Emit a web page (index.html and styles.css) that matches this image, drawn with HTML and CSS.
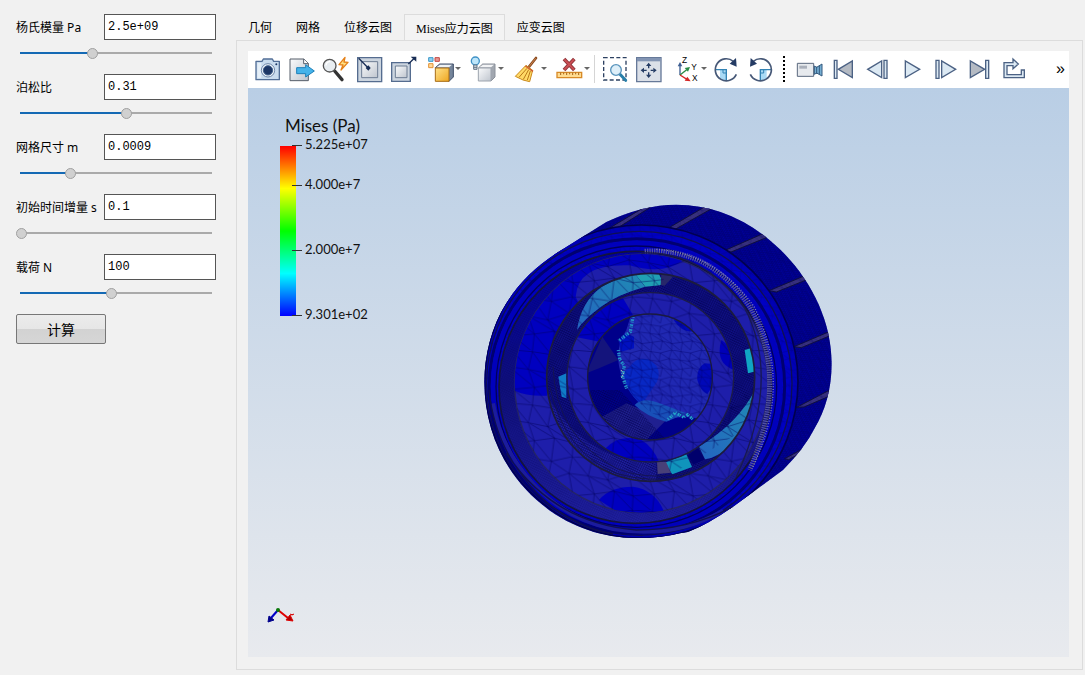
FILE: index.html
```html
<!DOCTYPE html>
<html lang="zh-CN">
<head>
  <meta charset="UTF-8">
  <title>Mises应力云图</title>
  <link rel="stylesheet" href="styles.css">
</head>
<body>
  <form class="params">
    <div class="field">
      <label for="young">杨氏模量 Pa</label>
      <input class="value" id="young" type="text" value="2.5e+09">
      <input class="slider" type="range" aria-label="杨氏模量" min="0" max="1000" value="376" style="--fill: 38%">
    </div>
    <div class="field">
      <label for="poisson">泊松比</label>
      <input class="value" id="poisson" type="text" value="0.31">
      <input class="slider" type="range" aria-label="泊松比" min="0" max="1000" value="556" style="--fill: 55%">
    </div>
    <div class="field">
      <label for="mesh">网格尺寸 m</label>
      <input class="value" id="mesh" type="text" value="0.0009">
      <input class="slider" type="range" aria-label="网格尺寸" min="0" max="1000" value="259" style="--fill: 27%">
    </div>
    <div class="field">
      <label for="step">初始时间增量 s</label>
      <input class="value" id="step" type="text" value="0.1">
      <input class="slider" type="range" aria-label="初始时间增量" min="0" max="1000" value="0" style="--fill: 3%">
    </div>
    <div class="field">
      <label for="load">载荷 N</label>
      <input class="value" id="load" type="text" value="100">
      <input class="slider" type="range" aria-label="载荷" min="0" max="1000" value="476" style="--fill: 48%">
    </div>
    <button class="run" type="button">计算</button>
  </form>

  <main class="results">
    <div class="tabs" role="tablist">
      <button class="tab" role="tab">几何</button>
      <button class="tab" role="tab">网格</button>
      <button class="tab" role="tab">位移云图</button>
      <button class="tab active" role="tab" aria-selected="true">Mises应力云图</button>
      <button class="tab" role="tab">应变云图</button>
    </div>

    <div class="pane">
      <div class="toolbar">
        <button class="tool" aria-label="截图">
          <svg viewBox="0 0 84 84">
            <path d="M9 19h18l4-7h27l4 7h17v55H9z" fill="#c9dcee" stroke="#526e96" stroke-width="4" stroke-linejoin="round"/>
            <path d="M13 24h12v45H13z" fill="#e5eff8"/>
            <circle cx="45" cy="46" r="20" fill="#edf3f9" stroke="#6f87a8" stroke-width="3"/>
            <circle cx="45" cy="46" r="14" fill="#1d3765" stroke="#46658f" stroke-width="3"/>
            <circle cx="70" cy="28" r="3" fill="#1d3765"/>
          </svg>
        </button>
        <button class="tool" aria-label="导出">
          <svg viewBox="0 0 84 84">
            <path d="M9 12h42l13 13v52H9z" fill="url(#steel)" stroke="#555d69" stroke-width="3"/>
            <path d="M50 12v14h14" fill="#fff" stroke="#555d69" stroke-width="3"/>
            <path d="M29 38h27v-9l26 19-26 18v-10H29z" fill="#45b3ea" stroke="#1d7fb8" stroke-width="3"/>
          </svg>
        </button>
        <button class="tool" aria-label="快速缩放">
          <svg viewBox="0 0 84 84">
            <path d="M41 48l22 26" stroke="#333" stroke-width="10" stroke-linecap="round"/>
            <circle cx="26" cy="32" r="19" fill="#e8edf1" stroke="#555" stroke-width="4"/>
            <path d="M15 31c1-8 6-12 13-11" fill="none" stroke="#fff" stroke-width="4"/>
            <path d="M72 7L54 29l12 1-6 15 21-23-12-1z" fill="#ffdf83" stroke="#e58018" stroke-width="4" stroke-linejoin="round"/>
          </svg>
        </button>
        <button class="tool" aria-label="缩放到数据">
          <svg viewBox="0 0 84 84">
            <path d="M8 8h72v72H8z" fill="#ccd5df" stroke="#556c8f" stroke-width="4"/>
            <path d="M20 20h48v48H20z" fill="url(#steel)" stroke="#6c7c92" stroke-width="3"/>
            <path d="M11 10l28 28" stroke="#182d55" stroke-width="4"/>
            <path d="M32 39l8-8 7 8-7 8z" fill="#182d55"/>
          </svg>
        </button>
        <button class="tool" aria-label="缩小到数据">
          <svg viewBox="0 0 84 84">
            <path d="M8 23h56v56H8z" fill="#ccd5df" stroke="#556c8f" stroke-width="4"/>
            <path d="M19 33h35v35H19z" fill="url(#steel)" stroke="#6c7c92" stroke-width="3"/>
            <path d="M58 27l18-17" stroke="#182d55" stroke-width="4"/>
            <path d="M65 5h17v15z" fill="#182d55"/>
          </svg>
        </button>
        <button class="tool menu" aria-label="背面颜色">
          <svg viewBox="0 0 84 84">
            <path d="M5 8h13v11H5z" fill="#8fd1f2" stroke="#3d98c8" stroke-width="3"/>
            <path d="M24 8h13v11H24z" fill="#e79a94" stroke="#c24742" stroke-width="3"/>
            <path d="M5 26h13v12H5z" fill="#ffd99b" stroke="#e39235" stroke-width="3"/>
            <path d="M25 38l13-11h41v39L66 79z" fill="#75859b" stroke="#3e4d68" stroke-width="3" stroke-linejoin="round"/>
            <path d="M28 37l11-8h36l-9 8z" fill="#eef2f6"/>
            <path d="M25 39h41v40H25z" fill="url(#gold)" stroke="#a86d16" stroke-width="3"/>
          </svg>
        </button>
        <button class="tool menu" aria-label="光照">
          <svg viewBox="0 0 84 84">
            <path d="M25 39l13-12h37v39L63 78z" fill="#a1a7b0" stroke="#8b919b" stroke-width="3" stroke-linejoin="round"/>
            <path d="M28 37l11-8h33l-9 8z" fill="#f3f4f6"/>
            <path d="M25 39h38v39H25z" fill="url(#steel)" stroke="#9da4ae" stroke-width="3"/>
            <circle cx="16" cy="18" r="12" fill="#bde6fb" stroke="#3f91c6" stroke-width="4"/>
            <path d="M11 30h10v13H11z" fill="#d3dbe3" stroke="#667686" stroke-width="3"/>
            <path d="M11 37h10" stroke="#667686" stroke-width="3"/>
          </svg>
        </button>
        <button class="tool menu" aria-label="清除">
          <svg viewBox="0 0 84 84">
            <path d="M69 9L46 38" stroke="#8c4b20" stroke-width="8" stroke-linecap="round"/>
            <path d="M68 10L48 35" stroke="#c98450" stroke-width="3"/>
            <path d="M39 31l20 15-9 34-20-5-23-11z" fill="#ffd966" stroke="#ca8b1e" stroke-width="3" stroke-linejoin="round"/>
            <path d="M42 40L18 67M47 44L31 73M52 48l-9 27" stroke="#b97818" stroke-width="3"/>
            <path d="M37 33l23 16" stroke="#d05c33" stroke-width="4"/>
          </svg>
        </button>
        <button class="tool menu" aria-label="删除测量">
          <svg viewBox="0 0 84 84">
            <path d="M24 12l31 33M55 12L24 45" stroke="#8e3539" stroke-width="11"/>
            <path d="M25 13l29 31M54 13L25 44" stroke="#ca4e54" stroke-width="6"/>
            <path d="M3 52h74v16H3z" fill="#ffdc91" stroke="#d88a27" stroke-width="4"/>
            <path d="M14 53v7M23 53v5M32 53v7M41 53v5M50 53v7M59 53v5M68 53v7" stroke="#a56313" stroke-width="3"/>
          </svg>
        </button>
        <span class="divider"></span>
        <button class="tool" aria-label="框选缩放">
          <svg viewBox="0 0 84 84">
            <path d="M8 8h67v67H8z" fill="none" stroke="#2d4162" stroke-width="4" stroke-dasharray="12 7"/>
            <path d="M57 58l17 18" stroke="#287fa9" stroke-width="9" stroke-linecap="round"/>
            <circle cx="45" cy="45" r="16" fill="#deeff9" stroke="#5793bc" stroke-width="4"/>
          </svg>
        </button>
        <button class="tool" aria-label="重置视图">
          <svg viewBox="0 0 84 84">
            <path d="M5 8h73v72H5z" fill="#dbe0e8" stroke="#667999" stroke-width="4"/>
            <path d="M6 9h71v10H6z" fill="#8294b3"/>
            <path d="M41 31v9M41 52v9M26 46h9M47 46h9" stroke="#243b64" stroke-width="4"/>
            <path d="M33 33l8-10 8 10zM33 59l8 10 8-10zM27 38l-10 8 10 8zM55 38l10 8-10 8z" fill="#243b64"/>
          </svg>
        </button>
        <button class="tool menu" aria-label="坐标轴方向">
          <svg viewBox="0 0 84 84">
            <path d="M21 60V30" stroke="#3d5e92" stroke-width="4"/>
            <path d="M14 34l7-13 7 13z" fill="#3d5e92"/>
            <path d="M21 60l20-16" stroke="#278b43" stroke-width="4"/>
            <path d="M35 39l16-3-6 14z" fill="#278b43"/>
            <path d="M21 60l21 13" stroke="#d52626" stroke-width="4"/>
            <path d="M43 65l10 14-18-2z" fill="#d52626"/>
            <text class="axis" x="27" y="23">Z</text>
            <text class="axis" x="55" y="44">Y</text>
            <text class="axis" x="57" y="79">X</text>
          </svg>
        </button>
        <button class="tool" aria-label="顺时针旋转">
          <svg viewBox="0 0 84 84">
            <path d="M24 43h19v34c-10 0-18-5-19-8z" fill="#a9daf5"/>
            <path d="M9 44h34v33" fill="none" stroke="#3383b4" stroke-width="4"/>
            <path d="M33 44v10h10" fill="none" stroke="#3383b4" stroke-width="3"/>
            <path d="M73 58A33 33 0 1 1 64 19" fill="none" stroke="#465877" stroke-width="5"/>
            <path d="M53 26l19-17 2 26z" fill="#243b64"/>
          </svg>
        </button>
        <button class="tool" aria-label="逆时针旋转">
          <svg viewBox="0 0 84 84">
            <path d="M43 43h19v26c-3 4-9 8-19 8z" fill="#a9daf5"/>
            <path d="M77 44H43v33" fill="none" stroke="#3383b4" stroke-width="4"/>
            <path d="M53 44v10H43" fill="none" stroke="#3383b4" stroke-width="3"/>
            <path d="M13 58A33 33 0 1 0 22 19" fill="none" stroke="#465877" stroke-width="5"/>
            <path d="M33 26L14 9l-2 26z" fill="#243b64"/>
          </svg>
        </button>
        <span class="grip"></span>
        <button class="tool" aria-label="录制">
          <svg viewBox="0 0 84 84">
            <path d="M4 25h49v39H4z" fill="#e7eaee" stroke="#59687e" stroke-width="3"/>
            <path d="M10 32h23v9H10z" fill="#aab0bb"/>
            <path d="M55 33l7 4 16-10v36l-16-9-7 4z" fill="#76afd3" stroke="#34597e" stroke-width="3"/>
            <path d="M62 35v22M70 32v26" stroke="#34597e" stroke-width="3"/>
          </svg>
        </button>
        <button class="tool" aria-label="第一帧">
          <svg class="play" viewBox="0 0 84 84"><path d="M13 16h8v54h-8z"/><path d="M67 18v50L25 43z" fill="#b4bac3"/></svg>
        </button>
        <button class="tool" aria-label="上一帧">
          <svg class="play" viewBox="0 0 84 84"><path d="M53 18v50L11 43zM60 16h9v54h-9z"/></svg>
        </button>
        <button class="tool" aria-label="播放">
          <svg class="play" viewBox="0 0 84 84"><path d="M22 18v50l43-25z"/></svg>
        </button>
        <button class="tool" aria-label="下一帧">
          <svg class="play" viewBox="0 0 84 84"><path d="M12 16h9v54h-9zM29 18v50l42-25z"/></svg>
        </button>
        <button class="tool" aria-label="最后一帧">
          <svg class="play" viewBox="0 0 84 84"><path d="M13 18v50l43-25z" fill="#b4bac3"/><path d="M59 16h9v54h-9z"/></svg>
        </button>
        <button class="tool" aria-label="循环">
          <svg class="play" viewBox="0 0 84 84"><path d="M12 68V23h27V12l16 15-16 14v-9H21v27h43V45h9v23z"/></svg>
        </button>
        <button class="more" aria-label="更多">»</button>
      </div>

      <div class="viewport">
        <svg class="legend" viewBox="0 0 100 210">
          <text class="legend-title" x="5" y="16">Mises (Pa)</text>
          <path d="M0 30h16v170H0z" fill="url(#rainbow)"/>
          <path d="M12 29h10v1H12zM12 69h10v1H12zM12 134h10v1H12zM12 199h10v1H12z" fill="#333"/>
          <text x="25" y="33">5.225e+07</text>
          <text x="25" y="73">4.000e+7</text>
          <text x="25" y="138">2.000e+7</text>
          <text x="25" y="203">9.301e+02</text>
        </svg>

        <svg class="model" viewBox="-2 9 1140 1080">
          <defs>
            <linearGradient id="rainbow" x2="0" y2="1">
              <stop offset="0" stop-color="#f00"/>
              <stop offset=".25" stop-color="#ff0"/>
              <stop offset=".5" stop-color="#0f0"/>
              <stop offset=".75" stop-color="#0ff"/>
              <stop offset="1" stop-color="#00f"/>
            </linearGradient>
            <linearGradient id="steel" x2="1" y2="1">
              <stop offset="0" stop-color="#fafbfc"/>
              <stop offset="1" stop-color="#bfc5ce"/>
            </linearGradient>
            <linearGradient id="gold" x2="1" y2="1">
              <stop offset="0" stop-color="#ffe28b"/>
              <stop offset="1" stop-color="#eea620"/>
            </linearGradient>
            <linearGradient id="wall" x2="0" y2="1">
              <stop offset="0" stop-color="#0000a8"/>
              <stop offset=".5" stop-color="#10107c"/>
              <stop offset="1" stop-color="#2020a0"/>
            </linearGradient>
            <linearGradient id="teal" x1="0" y1="1" x2="1" y2="0">
              <stop offset="0" stop-color="#2464c0"/>
              <stop offset="1" stop-color="#208cb4"/>
            </linearGradient>
            <pattern id="tri" width="180" height="160" patternUnits="userSpaceOnUse">
              <path d="M-52 0L8 5l57 9 63-14 60 5M-4 58l58 12 64-20 58 8 58 12M-50 118l64-6 60-8 56 14 64-6
                M14-48L8 5-4 58l18 54-6 53M188 5l-12 53 18 54M74-56l-9 70-11 56 20 34-9 70M128 0l-10 50 12 68-2 42
                M8 5l46 65M65 14l53 36M128 0l48 58M-4 58l78 46M54 70l76 48M118 50l76 62M-62 50l76 62
                M14 112l51 62M14-48l51 62M74 104l54 56M130 118l58 47M-50 118L8 165" fill="none" stroke="#000058" stroke-width="2" stroke-opacity=".7"/>
            </pattern>
            <pattern id="fine" width="90" height="80" patternUnits="userSpaceOnUse">
              <path d="M0 4l32 5 34-9 24 4M0 30l28 4 30-8 32 4M0 58l38-5 28 8 24-3M4 0L0 30l8 28-4 22M32 9l-4 25 10 19-6 27M66 0l-8 26 8 35v19
                M4 4l24 30M32 9l26 17M66 0l24 30M0 30l38 23M28 34l38 27M58 26l32 32M8 58l24 22M38 53l28 27M66 61l24 19" fill="none" stroke="#000068" stroke-width="2" stroke-opacity=".6"/>
            </pattern>
            <pattern id="dots" width="7" height="7" patternUnits="userSpaceOnUse" patternTransform="rotate(24)">
              <path d="M0 1h4M3 5h4" stroke="#00004c" stroke-width="2"/>
            </pattern>
            <pattern id="tread" width="12" height="7" patternUnits="userSpaceOnUse" patternTransform="rotate(-24)">
              <path d="M0 2h8M5 5h7" stroke="#00005c" stroke-width="2"/>
            </pattern>
            <clipPath id="floorClip"><ellipse cx="515" cy="580" rx="380" ry="388"/></clipPath>
            <clipPath id="rimClip"><ellipse cx="497" cy="592" rx="409" ry="408"/></clipPath>
            <clipPath id="grooveClip"><ellipse cx="543" cy="562" rx="312" ry="312"/></clipPath>
            <clipPath id="hubClip"><ellipse cx="542" cy="562" rx="250" ry="254"/></clipPath>
            <clipPath id="holeClip"><ellipse cx="541" cy="561" rx="187" ry="189"/></clipPath>
            <clipPath id="bodyClip"><use href="#body"/></clipPath>
          </defs>

          <!-- outer body with the slotted tread -->
          <path id="body" d="M44 575C44 500 65 410 110 340C150 275 200 230 260 190L410 96Q520 44 620 44Q760 44 880 134C1000 225 1086 370 1086 520C1086 600 1065 665 1035 715Q1005 775 940 840L790 950Q720 1000 655 1026L630 1030Q580 1044 500 1044C250 1044 44 840 44 575z" fill="#00009e"/>
          <g clip-path="url(#bodyClip)">
            <path d="M0 0h1140v1080H0z" fill="url(#tread)"/>
            <g fill="#38307c" stroke="#10103c" stroke-width="3">
              <path d="M530 48l-120 72 16 5 116-73z"/>
              <path d="M706 50L593 116l16 6 117-66z"/>
              <path d="M882 130l-118 52 20 4 106-43z"/>
              <path d="M1008 256L898 302l22 4 92-37z"/>
              <path d="M1076 426l-103 44 22 3 89-37z"/>
              <path d="M1076 602l-95 50 22-1 82-35z"/>
              <path d="M1000 776l-55 30 12 3 46-25z"/>
              <path d="M272 180l-24 21 17-1 30-25z"/>
            </g>
            <ellipse cx="515" cy="575" rx="470" ry="470" fill="#0000b4" stroke="#00004c" stroke-width="5"/>
            <ellipse cx="509" cy="580" rx="458" ry="456" fill="#0000c4" stroke="#101050" stroke-width="4"/>
            <path d="M0 0h1140v1080H0z" fill="url(#fine)" opacity=".6"/>
            <ellipse cx="502" cy="588" rx="443" ry="442" fill="none" stroke="#000070" stroke-width="9"/>
            <ellipse cx="500" cy="590" rx="430" ry="430" fill="none" stroke="#0000bc" stroke-width="14"/>
            <ellipse cx="500" cy="590" rx="421" ry="422" fill="none" stroke="#00005c" stroke-width="4"/>
            <path d="M70 640C100 820 245 980 430 1017Q610 1048 760 962" fill="none" stroke="#1c1c9c" stroke-width="12"/>
            <path d="M58 600C80 820 240 1000 430 1032M110 790Q250 1000 500 1020Q660 1020 790 950" fill="none" stroke="#101050" stroke-width="4"/>
          </g>

          <!-- recess wall and floor -->
          <ellipse cx="497" cy="592" rx="409" ry="408" fill="url(#wall)" stroke="#15153a" stroke-width="5"/>
          <g clip-path="url(#rimClip)">
            <path d="M0 0h1140v1080H0z" fill="url(#dots)" opacity=".35"/>
            <ellipse cx="515" cy="580" rx="380" ry="388" fill="#1e1eaa" stroke="#252566" stroke-width="4"/>
            <g clip-path="url(#floorClip)">
              <path d="M130 600Q170 620 232 617Q240 470 345 380L318 320Q325 220 480 226Q580 255 640 212L520 150H100z" fill="#0000c0"/>
              <path d="M388 930Q420 890 490 890Q560 900 585 970H450z" fill="#0000c0"/>
              <path d="M0 0h1140v1080H0z" fill="url(#tri)"/>
            </g>
          </g>
          <path d="M525 184Q720 170 840 350Q960 560 840 840" fill="none" stroke="#5353a0" stroke-width="15" stroke-dasharray="4 3"/>
          <path d="M560 178Q740 190 853 350Q970 580 850 830" fill="none" stroke="#8080b4" stroke-width="4" stroke-dasharray="3 5"/>
          <path d="M515 189Q700 180 826 355Q935 570 800 860" fill="none" stroke="#191952" stroke-width="4"/>

          <!-- groove around the hub -->
          <ellipse cx="543" cy="562" rx="312" ry="312" fill="#101084"/>
          <g clip-path="url(#grooveClip)">
            <path d="M240 630Q360 820 560 815V890H300z" fill="#2020a0"/>
            <path d="M0 0h1140v1080H0z" fill="url(#dots)"/>
            <path d="M322 420Q335 335 395 292Q440 262 498 254L526 290Q440 315 394 350Q340 390 322 420z" fill="url(#teal)"/>
            <path d="M498 254l30-6h38l15 32-10 6-44 4z" fill="#20a0b4"/>
            <path d="M575 250l35 10-25 27-12-2z" fill="#27276a"/>
            <path d="M266 560l24-10v75l-14-5z" fill="#107cc8"/>
            <path d="M825 480l20-6 12 70-22 6z" fill="#10a4c4"/>
            <path d="M584 818l66-25 17 38-59 22z" fill="#1094bc"/>
            <path d="M562 815h27l15 33-40 4z" fill="#484078"/>
            <path d="M688 770Q805 700 856 600Q855 700 785 764Q750 800 706 808z" fill="url(#teal)"/>
            <path d="M322 420Q335 335 395 292Q440 262 498 254h90l-15 35h-50Q440 315 394 350zM584 818l272-230v110L606 853zM266 540h24v85h-24z" fill="url(#tri)"/>
            <path d="M655 796l30-22 20 34-34 16z" fill="#00006c"/>
          </g>
          <ellipse cx="543" cy="562" rx="312" ry="312" fill="none" stroke="#1c1c3c" stroke-width="5"/>
          <path d="M240 590Q285 790 440 850Q540 880 640 860M250 530Q258 740 440 835Q550 880 690 838" fill="none" stroke="#141454" stroke-width="3"/>

          <!-- hub face -->
          <ellipse cx="542" cy="562" rx="250" ry="254" fill="#1e1eaa"/>
          <g clip-path="url(#hubClip)">
            <path d="M315 440Q390 335 460 325L490 375Q440 385 390 455z" fill="#0000c0"/>
            <path d="M408 775Q450 730 515 750Q550 770 570 820H440z" fill="#0000c0"/>
            <path d="M755 450q-20 70 38 90v-60z" fill="#0000b8"/>
            <path d="M0 0h1140v1080H0z" fill="url(#tri)"/>
          </g>
          <ellipse cx="542" cy="562" rx="250" ry="254" fill="none" stroke="#1c1c48" stroke-width="4"/>

          <!-- bore -->
          <ellipse cx="541" cy="561" rx="187" ry="189" fill="#00008a"/>
          <g clip-path="url(#holeClip)">
            <path d="M350 550L398 440l48 70-58 25z" fill="#14147c"/>
            <path d="M380 690l90-50 120 50-70 70z" fill="#202090"/>
            <path d="M340 600h110l150 160H350z" fill="url(#dots)"/>
            <path d="M485 372H740V650L680 685Q630 675 590 690Q500 655 456 560Q430 480 470 420z" fill="#2028b2"/>
            <path d="M468 430l25 10v35l-40 10-5-35z" fill="#0010c0"/>
            <path d="M480 530Q500 500 535 508Q580 530 562 575L515 645Q465 600 460 550z" fill="#0828c4"/>
            <path d="M705 520q-25 15-22 50 10 35 30 42l20-30v-60z" fill="#0008b8"/>
            <path d="M612 390q40 0 60 34-35 5-60-34z" fill="#0008b8"/>
            <path d="M495 645Q520 620 570 640L650 670 590 695Q530 680 495 645z" fill="#1850b8"/>
            <path d="M485 372H740V650L680 685Q630 675 590 690Q500 655 456 560Q430 480 470 420z" fill="url(#fine)"/>
            <path d="M490 380l-8 45-35 28M446 480l4 28 14 20-6 30 14 40" fill="none" stroke="#2290c8" stroke-width="10" stroke-dasharray="3 5 5 2"/>
            <path d="M595 688l22-20 25 14 12-8 18 16" fill="none" stroke="#22a4c8" stroke-width="9" stroke-dasharray="3 5 5 2"/>
            <path d="M454 540l8 10-7 14" fill="none" stroke="#c8d8b0" stroke-width="3" stroke-dasharray="3 3"/>
          </g>
          <ellipse cx="541" cy="561" rx="187" ry="189" fill="none" stroke="#1a1a40" stroke-width="4"/>
        </svg>

        <svg class="triad" viewBox="0 0 30 20">
          <path d="M12 5l10 8" stroke="#d00" stroke-width="2"/>
          <path d="M27 16l-7-1 4-5zM24 9l2 1 2-1" fill="#b00000" stroke="#d00" stroke-width="1"/>
          <path d="M12 5L5 13" stroke="#0000c8" stroke-width="2"/>
          <path d="M2 17l1-6 5 4z" fill="#00008c" stroke="#00008c"/>
          <circle cx="12" cy="5" r="2" fill="#087808"/>
        </svg>
      </div>
    </div>
  </main>
</body>
</html>
```

FILE: styles.css
```css
* {
  box-sizing: border-box;
}
body {
  display: flex;
  min-height: 100vh;
  margin: 0;
  background: #f1f1f1;
  color: #000;
  font: 12px "Noto Sans", "Noto Sans CJK SC", sans-serif;
}
button {
  padding: 0;
  border: none;
  background: none;
  color: inherit;
  font: inherit;
}

/* parameters */
.params {
  flex: none;
  width: 236px;
  padding: 14px 20px 0 16px;
}
.field {
  display: grid;
  grid-template-columns: 88px 1fr;
  grid-template-rows: 26px 13px;
  row-gap: 6px;
  align-items: center;
  padding-bottom: 15px;
  white-space: nowrap;
}
.value {
  width: 100%;
  height: 26px;
  padding: 0 3px;
  border: 1px solid #555;
  background: #fff;
  font: 12px "Liberation Mono", monospace;
}
.slider {
  grid-column: 1 / 3;
  width: 100%;
  height: 13px;
  margin: 0;
  appearance: none;
  background: none;
}
.slider::-webkit-slider-runnable-track {
  height: 2px;
  background: linear-gradient(to right, transparent 4px, #1469b4 4px, #1469b4 var(--fill), #aaa var(--fill), #aaa calc(100% - 4px), transparent calc(100% - 4px));
}
.slider::-webkit-slider-thumb {
  width: 11px;
  height: 11px;
  margin-top: -4px;
  appearance: none;
  border: 1px solid #a0a0a0;
  border-radius: 50%;
  background: #d0d0d0;
}
.run {
  width: 90px;
  height: 30px;
  border: 1px solid #777;
  border-radius: 2px;
  background: linear-gradient(#ececec, #e6e6e6 50%, #d2d2d2 50%, #d6d6d6);
  font-size: 14px;
}

/* tabs */
.results {
  flex: 1;
  display: flex;
  flex-direction: column;
  min-width: 0;
  padding: 14px 2px 5px 0;
}
.tabs {
  display: flex;
  height: 26px;
}
.tab {
  padding: 0 12px;
  font: 12px "Liberation Serif", "Noto Sans CJK SC", serif;
}
.tab.active {
  border: 1px solid #dcdcdc;
  border-bottom: none;
  padding: 0 11px;
  background: #f3f3f3;
}
.pane {
  flex: 1;
  display: flex;
  flex-direction: column;
  padding: 10px 13px 12px 11px;
  border: 1px solid #dcdcdc;
}

/* toolbar */
.toolbar {
  display: flex;
  align-items: center;
  height: 37px;
  padding: 0 0 2px 2px;
  background: #fff;
}
.tool {
  display: flex;
  flex: none;
  align-items: center;
  justify-content: center;
  width: 34px;
  height: 34px;
}
.tool svg {
  flex: none;
  width: 28px;
  height: 28px;
}
.tool.menu {
  justify-content: flex-start;
  width: 43px;
  padding-left: 7px;
}
.tool.menu::after {
  content: "";
  border: 3px solid transparent;
  border-top-color: #666;
  border-bottom: none;
}
.axis {
  font: 25px "Liberation Sans", sans-serif;
}
.play path {
  stroke: #4c6284;
  stroke-width: 4px;
}
.play path:not([fill]) {
  fill: #dce9f3;
}
.divider {
  width: 1px;
  height: 28px;
  margin: 0 3px 0 2px;
  background: #d5d5d5;
}
.grip {
  height: 26px;
  margin: 0 8px 0 6px;
  border-left: 2px dotted #000;
}
.more {
  margin: 0 4px 0 auto;
  font: 16px "Liberation Sans", sans-serif;
}

/* 3D view */
.viewport {
  position: relative;
  flex: 1;
  display: flex;
  align-items: center;
  justify-content: center;
  background: linear-gradient(#b9cee5, #e8eaee);
}
.model {
  width: 380px;
  height: 360px;
}
.legend {
  position: absolute;
  top: 28px;
  left: 32px;
  width: 100px;
  height: 210px;
  fill: #111;
  font: 13px Lato, sans-serif;
}
.legend-title {
  font-size: 17px;
}
.triad {
  position: absolute;
  bottom: 32px;
  left: 18px;
  width: 30px;
  height: 20px;
}
```
